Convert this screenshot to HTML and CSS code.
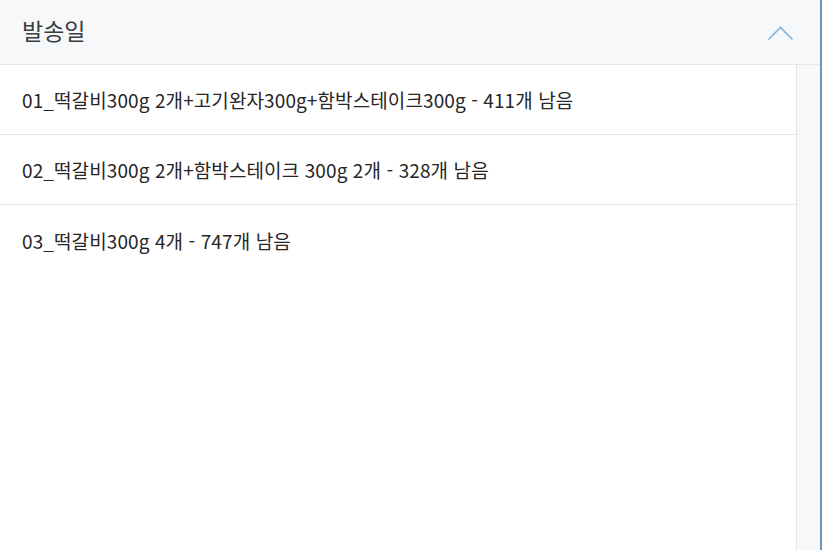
FILE: index.html
```html
<!DOCTYPE html>
<html lang="ko">
<head>
<meta charset="utf-8">
<link rel="stylesheet" href="styles.css">
</head>
<body>
<div class="panel">
  <div class="head">
    <span class="title">발송일</span>
    <svg class="chev" width="28" height="16" viewBox="0 0 28 16"><path d="M1.5 14.5 L13.5 2.5 L25.5 14.5" fill="none" stroke="#86b2d8" stroke-width="1.6"/></svg>
  </div>
  <div class="body">
    <ul class="list">
      <li class="item">01_떡갈비300g 2개+고기완자300g+함박스테이크300g - 411개 남음</li>
      <li class="item">02_떡갈비300g 2개+함박스테이크 300g 2개 - 328개 남음</li>
      <li class="item last">03_떡갈비300g 4개 - 747개 남음</li>
    </ul>
    <div class="scroll"></div>
  </div>
</div>
</body>
</html>
```
FILE: styles.css
```css
html, body { margin: 0; padding: 0; background: #fff; }
.panel {
  width: 822px; height: 550px; box-sizing: border-box;
  border-right: 2px solid #6b96b8;
  display: flex; flex-direction: column;
  font-family: "Noto Sans CJK KR", "Noto Sans", sans-serif;
  color: #333;
  overflow: hidden;
}
.head {
  height: 65px; box-sizing: border-box;
  background: #f6f8fa;
  border-bottom: 1px solid #e4e6e8;
  display: flex; align-items: center; justify-content: space-between;
  padding: 0 25px 0 22px;
}
.title { font-size: 23px; color: #3a3d40; letter-spacing: 0; margin-top: -4px; }
.chev { margin-top: 1px; }
.body { flex: 1; display: flex; }
.list { flex: 1; margin: 0; padding: 0; list-style: none; }
.item {
  height: 70px; box-sizing: border-box;
  border-bottom: 1px solid #e8e8e8;
  display: flex; align-items: center;
  padding: 0 22px;
  font-size: 19px; letter-spacing: 0.1px; color: #262626;
}
.item.last { border-bottom: 0; }
.scroll { width: 23px; background: #f8f8f8; border-left: 1px solid #e4e4e4; }
```
